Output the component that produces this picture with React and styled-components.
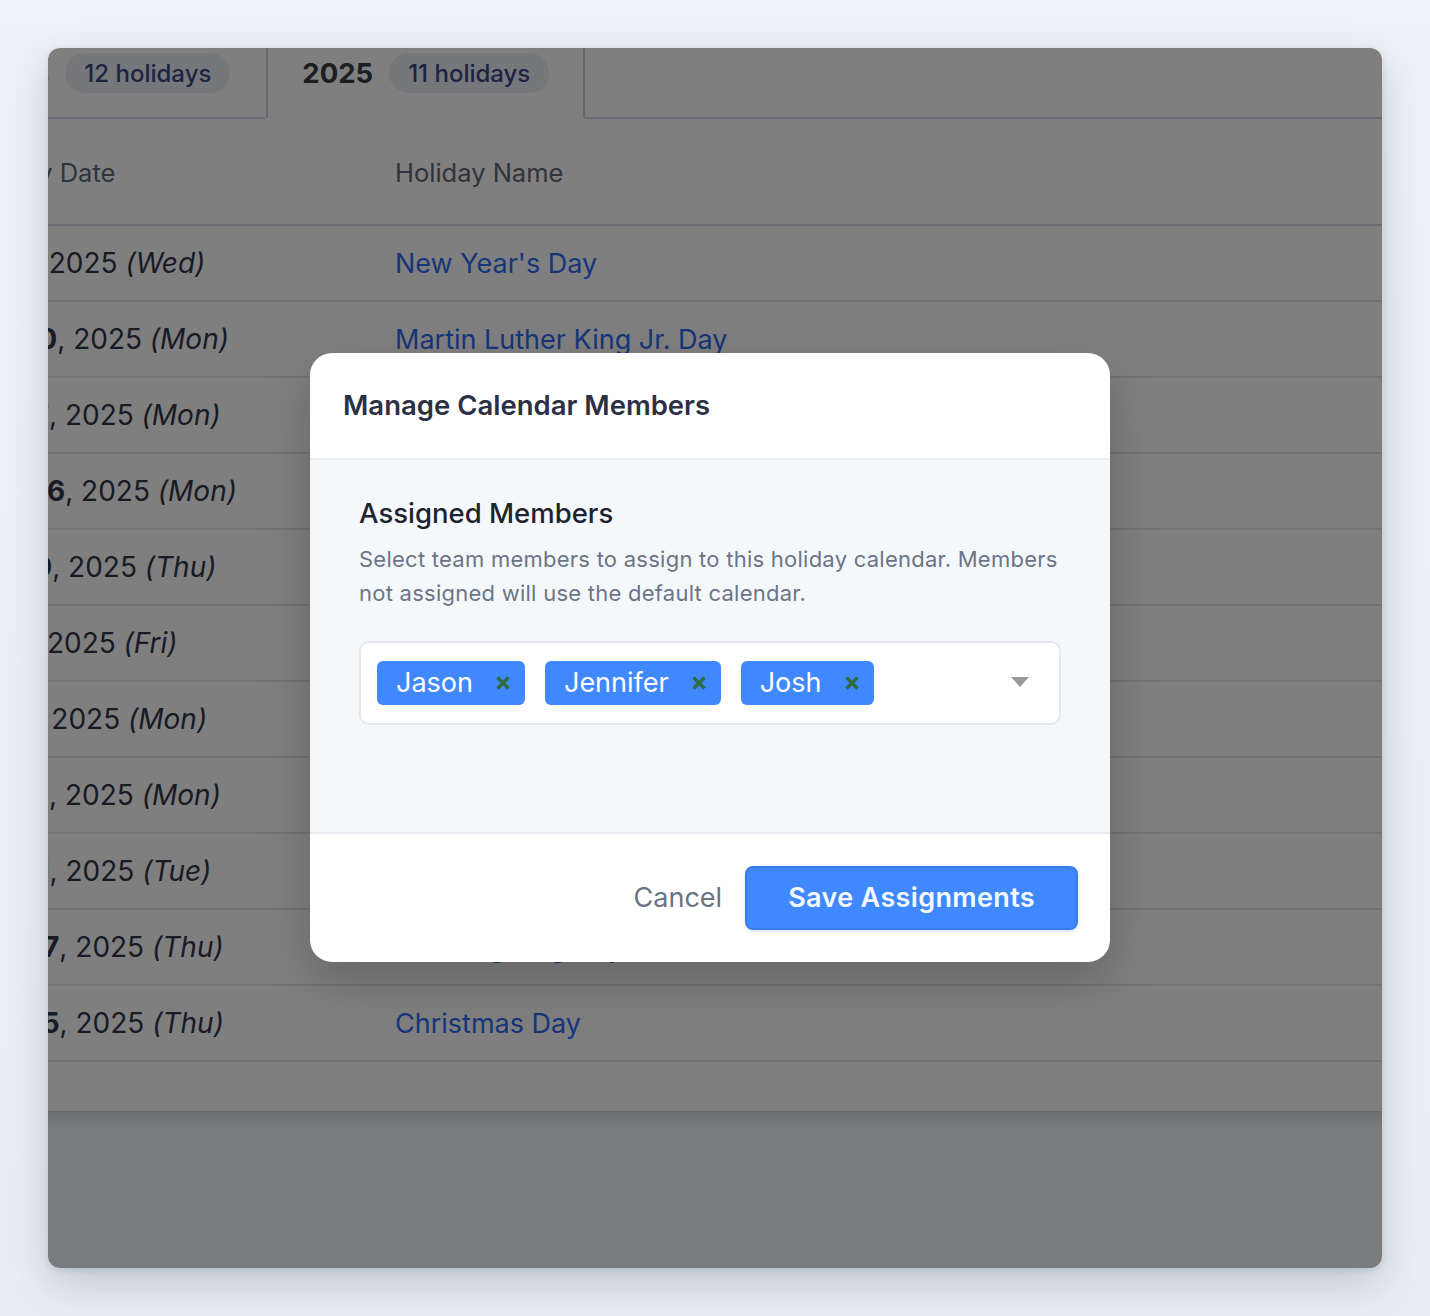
import React, { useLayoutEffect, useRef } from "react";
import styled, { createGlobalStyle } from "styled-components";

const GlobalStyle = createGlobalStyle`
  html, body {
    margin: 0;
    padding: 0;
    background: #edf1f5;
    font-family: Inter, "Noto Sans", "Liberation Sans", sans-serif;
  }
  * {
    box-sizing: border-box;
  }
`;

const Screen = styled.div`
  padding: 48px;
  height: 1316px;
  background: linear-gradient(180deg, #eef2f6 0%, #e9eef3 100%);
`;

const Window = styled.div`
  position: relative;
  height: 1220px;
  border-radius: 12px;
  overflow: hidden;
  box-shadow: 0 16px 40px rgba(40, 60, 90, 0.22), 0 2px 6px rgba(40, 60, 90, 0.12);
`;

const Viewport = styled.div`
  height: 100%;
  overflow: hidden;
`;

const Page = styled.div`
  width: 1800px;
  padding: 40px 0 220px 40px;
  background: #f4f6fa;
`;

const Panel = styled.div`
  width: 1700px;
  background: #ffffff;
  padding-bottom: 49px;
  box-shadow: 0 6px 14px rgba(20, 30, 50, 0.16);
`;

const TabList = styled.div`
  display: flex;
  align-items: stretch;
`;

const Tab = styled.div`
  display: flex;
  align-items: center;
  gap: 16px;
  padding: 24px 34px;
  border: 2px solid transparent;
  border-bottom-color: #cbd5e1;
  border-top: none;

  ${(p) =>
    p.$active &&
    `
    border-color: #cbd5e1;
    border-bottom-color: transparent;
  `}
`;

const TabFiller = styled.div`
  flex: 1;
  border-bottom: 2px solid #cbd5e1;
`;

const TabLabel = styled.span`
  font-size: 27.5px;
  font-weight: 700;
  color: ${(p) => (p.$active ? "#3a3d44" : "#6b7280")};
`;

const Pill = styled.span`
  display: inline-flex;
  align-items: center;
  height: 40px;
  padding: 0 19px;
  border-radius: 20px;
  background: #eceef5;
  color: #3b4687;
  font-size: 24px;
  font-weight: 500;
`;

const Table = styled.table`
  border-collapse: collapse;
  table-layout: fixed;
  width: 100%;
`;

const HeadCell = styled.th`
  text-align: left;
  font-weight: 400;
  font-size: 25.5px;
  color: #5f6877;
  padding: 36px 24px 34px 20px;
  line-height: 35px;
  border-bottom: 2px solid #d3dae2;
  width: ${(p) => p.$width || "auto"};

  & + & {
    padding-left: 24px;
  }
`;

const Cell = styled.td`
  height: 76px;
  padding: 0 24px 0 22px;
  font-size: 28px;
  line-height: 35px;
  color: #30364a;
  border-bottom: 2px solid #e6e6e6;
  white-space: nowrap;

  & + & {
    padding-left: 24px;
  }

  strong {
    font-weight: 700;
  }
  em {
    font-style: italic;
  }
`;

const HolidayLink = styled.span`
  font-size: 27px;
  color: #2f6cf5;
`;

const Overlay = styled.div`
  position: absolute;
  inset: 0;
  background: rgba(0, 0, 0, 0.5);
  display: flex;
  align-items: center;
  justify-content: center;
  padding: 0 10px 2px 0;
`;

const Dialog = styled.div`
  width: 800px;
  background: #ffffff;
  border-radius: 22px;
  overflow: hidden;
  box-shadow: 0 20px 50px rgba(0, 0, 0, 0.2);
`;

const DialogHeader = styled.div`
  height: 107px;
  padding: 0 33px;
  display: flex;
  align-items: center;
  border-bottom: 2px solid #eceff3;
`;

const DialogTitle = styled.h2`
  margin: 0;
  font-size: 27.5px;
  font-weight: 600;
  color: #2b3145;
`;

const DialogBody = styled.div`
  background: #f5f8fb;
  padding: 34px 49px 107px;
`;

const SectionTitle = styled.h3`
  margin: 0 0 10px;
  font-size: 27.5px;
  font-weight: 500;
  color: #1f2330;
  line-height: 38px;
`;

const Description = styled.p`
  margin: 0 0 31px;
  font-size: 22px;
  line-height: 34px;
  color: #6b7587;
  letter-spacing: 0.25px;
`;

const SelectBox = styled.div`
  display: flex;
  align-items: center;
  gap: 20px;
  height: 84px;
  padding: 0 30px 0 16px;
  background: #ffffff;
  border: 2px solid #e4e7eb;
  border-radius: 10px;
`;

const Chip = styled.span`
  display: inline-flex;
  align-items: center;
  gap: 22px;
  height: 44px;
  padding: 0 14px 0 19px;
  background: #3f88fe;
  border-radius: 6px;
  color: #ffffff;
  font-size: 27px;
`;

const ChipRemove = styled.span`
  display: inline-flex;
  color: #2f6b3e;
`;

const Caret = styled.span`
  margin-left: auto;
  margin-bottom: 2px;
  width: 0;
  height: 0;
  border-left: 9px solid transparent;
  border-right: 9px solid transparent;
  border-top: 10px solid #999999;
`;

const DialogFooter = styled.div`
  display: flex;
  justify-content: flex-end;
  align-items: center;
  gap: 10px;
  padding: 32px;
  border-top: 2px solid #e6e9ee;
`;

const CancelButton = styled.button`
  border: none;
  background: none;
  font-family: inherit;
  font-size: 27px;
  color: #6b7282;
  padding: 0 13px;
  cursor: pointer;
`;

const PrimaryButton = styled.button`
  height: 64px;
  padding: 0 41px;
  border: 2px solid #3a7be6;
  border-radius: 8px;
  background: #3f88fe;
  color: #f4f8ff;
  font-family: inherit;
  font-size: 27px;
  font-weight: 600;
  letter-spacing: 0.35px;
  box-shadow: 0 2px 4px rgba(30, 60, 120, 0.15);
  cursor: pointer;
`;

const holidays = [
  ["Jan 1", "Wed", "New Year's Day"],
  ["Jan 20", "Mon", "Martin Luther King Jr. Day"],
  ["Feb 17", "Mon", "Presidents' Day"],
  ["May 26", "Mon", "Memorial Day"],
  ["Jun 19", "Thu", "Juneteenth"],
  ["Jul 4", "Fri", "Independence Day"],
  ["Sep 1", "Mon", "Labor Day"],
  ["Oct 13", "Mon", "Columbus Day"],
  ["Nov 11", "Tue", "Veterans Day"],
  ["Nov 27", "Thu", "Thanksgiving Day"],
  ["Dec 25", "Thu", "Christmas Day"],
];

const members = ["Jason", "Jennifer", "Josh"];

const RemoveIcon = () => (
  <svg width="16" height="16" viewBox="0 0 16 16" fill="none">
    <path d="M2.5 2.5L13.5 13.5M13.5 2.5L2.5 13.5" stroke="currentColor" strokeWidth="3.2" />
  </svg>
);

export default function App() {
  const viewRef = useRef(null);

  useLayoutEffect(() => {
    if (viewRef.current) {
      viewRef.current.scrollLeft = 146;
      viewRef.current.scrollTop = 59;
    }
  }, []);

  return (
    <Screen>
      <GlobalStyle />
      <Window>
        <Viewport ref={viewRef}>
          <Page>
            <Panel>
              <TabList>
                <Tab>
                  <TabLabel>2024</TabLabel>
                  <Pill>12 holidays</Pill>
                </Tab>
                <Tab $active>
                  <TabLabel $active>2025</TabLabel>
                  <Pill>11 holidays</Pill>
                </Tab>
                <TabFiller />
              </TabList>
              <Table>
                <thead>
                  <tr>
                    <HeadCell $width="429px">Holiday Date</HeadCell>
                    <HeadCell>Holiday Name</HeadCell>
                  </tr>
                </thead>
                <tbody>
                  {holidays.map(([date, day, name]) => (
                    <tr key={name}>
                      <Cell>
                        <strong>{date}</strong>, 2025 <em>({day})</em>
                      </Cell>
                      <Cell>
                        <HolidayLink>{name}</HolidayLink>
                      </Cell>
                    </tr>
                  ))}
                </tbody>
              </Table>
            </Panel>
          </Page>
        </Viewport>

        <Overlay>
          <Dialog>
            <DialogHeader>
              <DialogTitle>Manage Calendar Members</DialogTitle>
            </DialogHeader>
            <DialogBody>
              <SectionTitle>Assigned Members</SectionTitle>
              <Description>
                Select team members to assign to this holiday calendar. Members
                not assigned will use the default calendar.
              </Description>
              <SelectBox>
                {members.map((m) => (
                  <Chip key={m}>
                    {m}
                    <ChipRemove>
                      <RemoveIcon />
                    </ChipRemove>
                  </Chip>
                ))}
                <Caret />
              </SelectBox>
            </DialogBody>
            <DialogFooter>
              <CancelButton>Cancel</CancelButton>
              <PrimaryButton>Save Assignments</PrimaryButton>
            </DialogFooter>
          </Dialog>
        </Overlay>
      </Window>
    </Screen>
  );
}
